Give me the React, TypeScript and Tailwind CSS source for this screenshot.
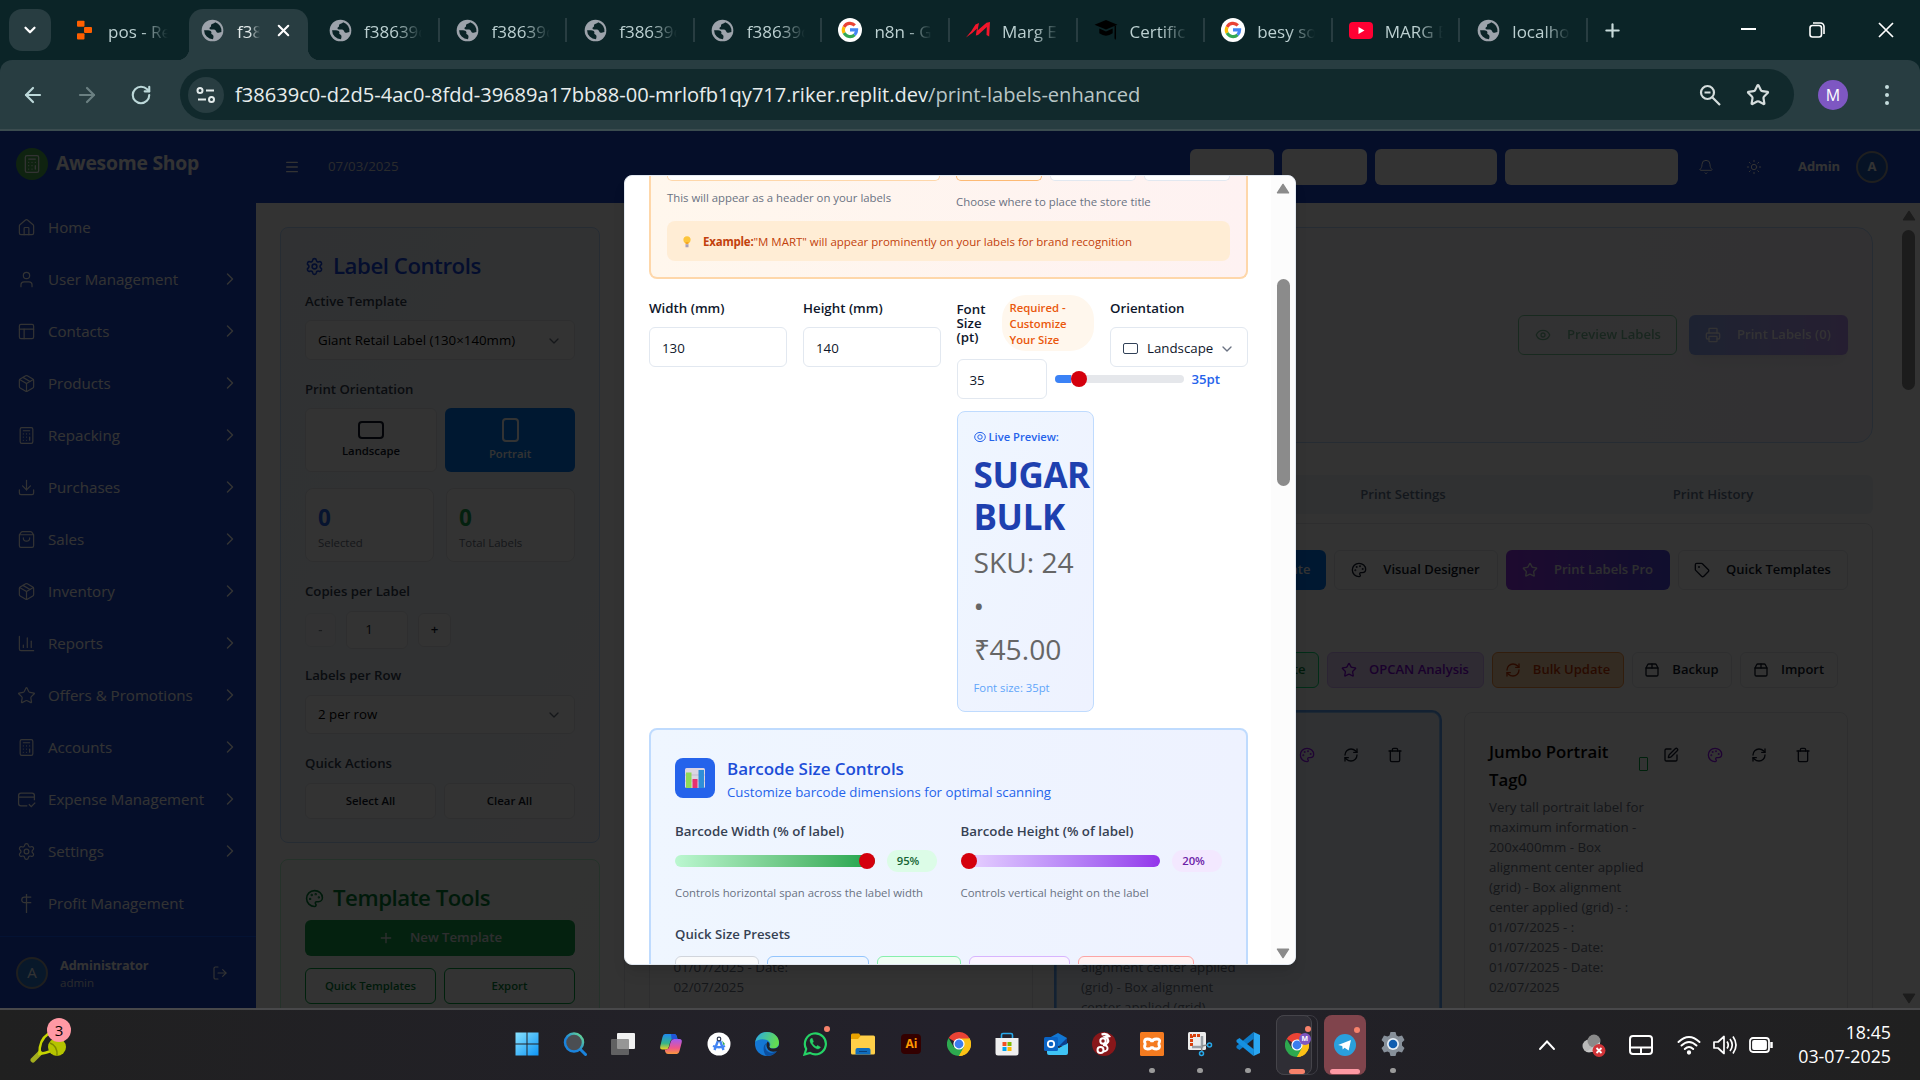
import type { ReactNode } from "react";
import {
  ArrowLeft, ArrowRight, Bell, Calculator, ChartColumn, ChevronDown, ChevronRight, ChevronUp, Download, Eye, House,
  LogOut, Menu, Package, Package2, Palette, PanelsTopLeft, Plus, Printer, RefreshCw, RotateCw, Settings, ShoppingBag, SquarePen,
  Star, Sun, Tag, Trash, User, X,
} from "lucide-react";

/* ---------- browser chrome ---------- */

function Globe() {
  return (
    <svg viewBox="0 0 24 24" className="size-[23px]">
      <circle cx="12" cy="12" r="11.300" fill="#9da3ab" />
      <path d="M3.200 11.800c2.600-.2 5.800-.4 7.200.9 1.400 1.300-.6 2.300.9 3.200 1.500.8 2.400 1.800 1.200 5.100A9.300 9.300 0 0 1 3.200 11.800z" fill="#0b2427" />
      <path d="M14.800 3.300c-.6 1.600-3.200 1.100-4.100 2.400-.7 1.100.4 2-.9 2.700-1.100.6-1.300 1.700-.3 2.300 1.400.8 3.900-.2 5.300.9 1.300 1 .9 2.500 2.400 2.800 1.400.3 2.300-.9 4.100-.9A9.300 9.300 0 0 0 14.800 3.300z" fill="#0b2427" />
    </svg>
  );
}

function Google() {
  return (
    <svg viewBox="0 0 24 24" className="size-6">
      <circle cx="12" cy="12" r="12" fill="#fff" />
      <g fill="none" strokeWidth="3.200">
        <path d="M16.800 7.400A6.700 6.700 0 0 0 6.100 8.900" stroke="#ea4335" />
        <path d="M6.100 8.900a6.700 6.700 0 0 0 0 6.200" stroke="#fbbc05" />
        <path d="M6.100 15.100a6.700 6.700 0 0 0 10.500 1.700" stroke="#34a853" />
        <path d="M16.600 16.800a6.700 6.700 0 0 0 2-4.900H12" stroke="#4285f4" />
      </g>
    </svg>
  );
}

function Replit() {
  return (
    <svg viewBox="0 0 16 20" className="h-[20px] w-[15px]" fill="#ff5f00">
      <rect x="0" y="0" width="8" height="6.500" rx="1" />
      <rect x="7.500" y="6.700" width="8.500" height="6.500" rx="1" />
      <rect x="0" y="13.500" width="8" height="6.500" rx="1" />
    </svg>
  );
}

function Marg() {
  return (
    <svg viewBox="0 0 24 16" className="h-4 w-6">
      <path d="M0 15.500Q6 9 9.500 2.500L13 1l-1.500 7.500L20.500.8 24 0l-.8 14.500-2.700-1.500.3-8L12 13l-2.200.5 1.200-7Q7 11 0 15.500z" fill="#f3162b" />
    </svg>
  );
}

function GradCap() {
  return (
    <svg viewBox="0 0 24 22" className="h-[21px] w-6" fill="#000">
      <path d="M12 0l12 5-12 5L0 5z" />
      <path d="M5 9l7 3 7-3v5q-7 5-14 0zM21 6h1.500v13l-.8 2-.8-2z" />
    </svg>
  );
}

function YouTube() {
  return (
    <svg viewBox="0 0 24 17" className="h-[17px] w-6">
      <rect width="24" height="17" rx="4" fill="#ff0033" />
      <path d="M9.500 5l6 3.500-6 3.500z" fill="#fff" />
    </svg>
  );
}

const tabs: { icon: ReactNode; title: string }[] = [
  { icon: <Globe />, title: "f38639c" },
  { icon: <Globe />, title: "f38639c" },
  { icon: <Globe />, title: "f38639c" },
  { icon: <Globe />, title: "f38639c" },
  { icon: <Google />, title: "n8n - G" },
  { icon: <Marg />, title: "Marg E" },
  { icon: <GradCap />, title: "Certific" },
  { icon: <Google />, title: "besy so" },
  { icon: <YouTube />, title: "MARG E" },
  { icon: <Globe />, title: "localho" },
];

const fade = "[mask-image:linear-gradient(to_right,#000_55%,transparent)]";

function TabStrip() {
  return (
    <div className="flex h-[60px] bg-[#0b2427] text-[17px] text-[#bcd0d1]">
      <div className="mt-[9px] ml-[9px] flex size-[42px] items-center justify-center rounded-[13px] bg-[#283d41]">
        <ChevronDown className="size-[18px] text-white" strokeWidth={3} />
      </div>
      <div className="flex w-[138px] items-center pl-[26px]">
        <Replit />
        <span className={`mt-[3px] ml-4 w-[60px] overflow-hidden whitespace-nowrap ${fade}`}>pos - Re</span>
      </div>
      <div className="relative mt-[9px] flex w-[119px] items-center rounded-t-[14px] bg-[#283d41] pb-[9px] pl-[12px]">
        <span className="absolute bottom-0 -left-3 size-3 bg-[radial-gradient(circle_at_0_0,transparent_12px,#283d41_12.500px)]" />
        <span className="absolute -right-3 bottom-0 size-3 bg-[radial-gradient(circle_at_100%_0,transparent_12px,#283d41_12.500px)]" />
        <Globe />
        <span className={`mt-[3px] ml-[13px] w-[23px] overflow-hidden whitespace-nowrap text-[#e3ebeb] ${fade}`}>f38</span>
        <X className="ml-[14px] size-[19px] text-white" strokeWidth={2.600} />
      </div>
      <div className="ml-[4px] flex">
        {tabs.map((t, i) => (
          <div key={i} className="flex w-[127.600px] items-center pl-4">
            <span className="flex w-6 justify-center">{t.icon}</span>
            <span className={`mt-[3px] ml-3 w-[58px] overflow-hidden whitespace-nowrap ${fade}`}>{t.title}</span>
            <span className="ml-auto h-6 w-[2px] bg-[#283d41]" />
          </div>
        ))}
      </div>
      <Plus className="mt-[20px] ml-[14px] size-[21px] text-[#c8dada]" strokeWidth={2.500} />
      <div className="mr-[26px] ml-auto flex items-center gap-[53px] text-white">
        <span className="mt-[-2px] h-[2px] w-[15px] bg-white" />
        <svg viewBox="0 0 16 16" className="size-4" fill="none" stroke="currentColor" strokeWidth="1.600">
          <rect x="1" y="3.500" width="11.500" height="11.500" rx="2.500" />
          <path d="M4 1h7.500A3.500 3.500 0 0 1 15 4.500V12" />
        </svg>
        <svg viewBox="0 0 16 16" className="size-4" stroke="currentColor" strokeWidth="1.700">
          <path d="M1 1l14 14M15 1L1 15" />
        </svg>
      </div>
    </div>
  );
}

function Toolbar() {
  return (
    <div className="bg-[#0b2427]">
      <div className="flex h-[71px] items-center rounded-t-xl border-b-2 border-[#3b4c4f] bg-[#283d41] pl-[21px] text-[#bcd8d9]">
        <ArrowLeft className="size-6" strokeWidth={2.200} />
        <ArrowRight className="ml-[30px] size-6 text-[#6b8082]" strokeWidth={2.200} />
        <RotateCw className="ml-[31px] size-[22px]" strokeWidth={2.300} />
        <div className="ml-[28px] flex h-[51px] w-[1614px] items-center rounded-full bg-[#11292c] pl-2">
          <div className="flex size-9 items-center justify-center rounded-full bg-[#283d41]">
            <svg viewBox="0 0 20 20" className="size-5" fill="none" stroke="#e3ebeb" strokeWidth="2">
              <circle cx="4" cy="5.500" r="2.500" />
              <path d="M10 5.500h8M2 14.500h8" />
              <circle cx="15.500" cy="14.500" r="2.500" />
            </svg>
          </div>
          <span className="mt-px ml-[11px] text-[20.080px] whitespace-nowrap text-[#e8eded]">
            f38639c0-d2d5-4ac0-8fdd-39689a17bb88-00-mrlofb1qy717.riker.replit.dev<span className="text-[#b9c6c6]">/print-labels-enhanced</span>
          </span>
          <svg viewBox="0 0 24 24" className="ml-auto size-6" fill="none" stroke="#d5dddd" strokeWidth="2.200">
            <circle cx="9.500" cy="9.500" r="6.500" />
            <path d="M14.500 14.500L22 22M6.500 9.500h6" />
          </svg>
          <Star className="mr-6 ml-6 size-6 text-[#d5dddd]" strokeWidth={2.200} />
        </div>
        <span className="ml-6 flex size-[30px] items-center justify-center rounded-full bg-[#7e57c2] text-[16px] text-white">M</span>
        <span className="ml-[37px] flex flex-col gap-[4px]">
          <i className="size-[4px] rounded-full bg-[#c5dcdc]" />
          <i className="size-[4px] rounded-full bg-[#c5dcdc]" />
          <i className="size-[4px] rounded-full bg-[#c5dcdc]" />
        </span>
      </div>
    </div>
  );
}

/* ---------- shop page ---------- */

function ExpenseIcon() {
  return (
    <svg viewBox="0 0 24 24" className="size-[19px]" fill="none" stroke="currentColor" strokeWidth="1.600">
      <path d="M22 13V7a3 3 0 0 0-3-3H5a3 3 0 0 0-3 3v10a3 3 0 0 0 3 3h8M2 9h20M15 18l3 3 5-5" />
    </svg>
  );
}

function ProfitIcon() {
  return (
    <svg viewBox="0 0 24 24" className="size-[19px]" fill="none" stroke="currentColor" strokeWidth="1.600">
      <path d="M12 0v24M18 4H9.500a3.500 3.500 0 0 0 0 7H18" />
    </svg>
  );
}

const ic = "size-[19px]";
const nav: { icon: ReactNode; label: string; more: boolean }[] = [
  { icon: <House className={ic} strokeWidth={1.500} />, label: "Home", more: false },
  { icon: <User className={ic} strokeWidth={1.500} />, label: "User Management", more: true },
  { icon: <PanelsTopLeft className={ic} strokeWidth={1.500} />, label: "Contacts", more: true },
  { icon: <Package className={ic} strokeWidth={1.500} />, label: "Products", more: true },
  { icon: <Calculator className={ic} strokeWidth={1.500} />, label: "Repacking", more: true },
  { icon: <Download className={ic} strokeWidth={1.500} />, label: "Purchases", more: true },
  { icon: <ShoppingBag className={ic} strokeWidth={1.500} />, label: "Sales", more: true },
  { icon: <Package className={ic} strokeWidth={1.500} />, label: "Inventory", more: true },
  { icon: <ChartColumn className={ic} strokeWidth={1.500} />, label: "Reports", more: true },
  { icon: <Star className={ic} strokeWidth={1.500} />, label: "Offers & Promotions", more: true },
  { icon: <Calculator className={ic} strokeWidth={1.500} />, label: "Accounts", more: true },
  { icon: <ExpenseIcon />, label: "Expense Management", more: true },
  { icon: <Settings className={ic} strokeWidth={1.500} />, label: "Settings", more: true },
  { icon: <ProfitIcon />, label: "Profit Management", more: false },
];

function Sidebar() {
  return (
    <aside className="flex w-64 shrink-0 flex-col bg-[#1a46cc] text-white">
      <div className="flex h-[65px] items-center pl-4">
        <span className="flex size-8 items-center justify-center rounded-full bg-[#4caf50]">
          <Calculator className="size-[20px]" strokeWidth={1.500} />
        </span>
        <span className="ml-2 text-[19.300px] font-bold tracking-[-0.200px]">Awesome Shop</span>
      </div>
      <nav className="mt-[5px] flex flex-col">
        {nav.map((n) => (
          <div key={n.label} className="flex h-[52px] items-center pr-[16px] pl-[17px] text-[15.100px]">
            {n.icon}
            <span className="ml-3 whitespace-nowrap">{n.label}</span>
            {n.more && <ChevronRight className="ml-auto size-[20px]" strokeWidth={1.700} />}
          </div>
        ))}
      </nav>
      <div className="mt-[7px] flex flex-1 items-center border-t border-blue-600 pl-4">
        <span className="flex size-8 items-center justify-center rounded-full border-2 border-[#999] bg-[#2c78d0] text-[15px]">A</span>
        <span className="ml-3 flex flex-col">
          <span className="text-[12.700px] leading-5 font-bold tracking-[-0.100px]">Administrator</span>
          <span className="text-[11.500px] leading-4 text-gray-300">admin</span>
        </span>
        <LogOut className="mr-[28px] ml-auto size-4" strokeWidth={1.700} />
      </div>
    </aside>
  );
}

function Header() {
  return (
    <header className="flex h-[72px] shrink-0 items-center bg-[#1a46cc] pl-7 text-white">
      <Menu className="size-4" />
      <span className="ml-7 text-[13.300px] text-gray-300">07/03/2025</span>
      <div className="ml-auto flex h-9 gap-2">
        <span className="w-[84px] rounded-md bg-white" />
        <span className="w-[85px] rounded-md bg-white" />
        <span className="w-[122px] rounded-md bg-white" />
        <span className="w-[173px] rounded-md bg-white" />
      </div>
      <Bell className="ml-5 size-4" strokeWidth={1.500} />
      <Sun className="ml-8 size-4" strokeWidth={1.500} />
      <span className="ml-9 text-[13px] font-bold tracking-[-0.100px]">Admin</span>
      <span className="mr-8 ml-4 flex size-8 items-center justify-center rounded-full border-2 border-[#999] bg-[#1f5db8] text-[13px] font-bold">A</span>
    </header>
  );
}

const fieldLabel = "h-5 text-[13.200px] leading-5 font-semibold text-gray-700";
const whiteBtn = "flex items-center justify-center rounded-md border border-gray-200 bg-white font-semibold text-gray-900";

function LabelControls() {
  return (
    <section className="h-[616px] rounded-lg border border-blue-200 bg-linear-to-br from-blue-50 to-slate-50 px-6 pt-[23px]">
      <h2 className="flex h-[30px] items-center text-[22.200px] font-semibold tracking-[-0.450px] text-blue-700">
        <Settings className="mr-[9px] size-[19px]" />
        Label Controls
      </h2>
      <div className={`${fieldLabel} mt-[10px]`}>Active Template</div>
      <div className="mt-[9px] flex h-10 items-center rounded-md border border-gray-200 bg-white px-3 pt-px text-[13.300px] text-black">
        Giant Retail Label (130×140mm)
        <ChevronDown className="ml-auto size-4 text-gray-500" />
      </div>
      <div className={`${fieldLabel} mt-[19px]`}>Print Orientation</div>
      <div className="mt-[9px] flex h-16 gap-[8px]">
        <div className={`${whiteBtn} flex-1 flex-col gap-1 text-[11.300px]`}>
          <span className="h-[18px] w-[26px] rounded-[4px] border-2 border-gray-900" />
          Landscape
        </div>
        <div className="flex flex-1 flex-col items-center justify-center gap-1 rounded-md bg-[#0079f2] text-[11.300px] font-semibold text-white">
          <span className="h-[24px] w-[17px] rounded-[4px] border-2 border-white" />
          <span className="leading-4">Portrait</span>
        </div>
      </div>
      <div className="mt-4 flex h-[74px] gap-3">
        <div className="flex flex-1 flex-col rounded-lg border border-gray-200 bg-white pt-3 pl-3">
          <span className="text-[22.500px] leading-[34px] font-bold text-[#2563eb]">0</span>
          <span className="text-[11.400px] leading-4 text-gray-500">Selected</span>
        </div>
        <div className="flex flex-1 flex-col rounded-lg border border-gray-200 bg-white pt-3 pl-3">
          <span className="text-[22.500px] leading-[34px] font-bold text-[#16a34a]">0</span>
          <span className="text-[11.400px] leading-4 text-gray-500">Total Labels</span>
        </div>
      </div>
      <div className={`${fieldLabel} mt-[19px]`}>Copies per Label</div>
      <div className="mt-[10px] flex h-[38px] items-center text-[13.300px]">
        <span className={`${whiteBtn} h-[34px] w-[31px] opacity-50`}>-</span>
        <span className="ml-[10px] flex h-[38px] w-[62px] items-center justify-center rounded-md border border-gray-200 bg-white pr-4 text-gray-900">1</span>
        <span className={`${whiteBtn} ml-[10px] h-[34px] w-[33px]`}>+</span>
      </div>
      <div className={`${fieldLabel} mt-4`}>Labels per Row</div>
      <div className="mt-[10px] flex h-[39px] items-center rounded-md border border-gray-200 bg-white px-3 text-[13.300px] text-black">
        2 per row
        <ChevronDown className="ml-auto size-4 text-gray-500" />
      </div>
      <div className={`${fieldLabel} mt-[19px]`}>Quick Actions</div>
      <div className="mt-[10px] flex h-9 gap-[8px] text-[11.400px]">
        <span className={`${whiteBtn} flex-1`}>Select All</span>
        <span className={`${whiteBtn} flex-1`}>Clear All</span>
      </div>
    </section>
  );
}

function TemplateTools() {
  return (
    <section className="mt-4 h-[400px] rounded-lg border border-green-200 bg-linear-to-br from-green-50/50 to-slate-50 px-6 pt-[23px]">
      <h2 className="flex h-[30px] items-center text-[22.200px] font-semibold tracking-[-0.450px] text-green-700">
        <Palette className="mr-[9px] size-[19px]" />
        Template Tools
      </h2>
      <div className="mt-[7px] flex h-9 items-center justify-center rounded-md bg-[#16a34a] text-[13.200px] font-semibold text-gray-200">
        <Plus className="mr-4 size-4" />
        New Template
      </div>
      <div className="mt-3 flex h-9 gap-[8px] text-[11.300px] font-semibold text-green-700">
        <span className="flex flex-1 items-center justify-center rounded-md border border-green-600 bg-white">Quick Templates</span>
        <span className="flex flex-1 items-center justify-center rounded-md border border-green-600 bg-white">Export</span>
      </div>
    </section>
  );
}

function CardActions() {
  return (
    <div className="mr-[36px] ml-auto flex items-center gap-7 self-start pt-[34px] text-gray-900">
      <SquarePen className="size-4" />
      <Palette className="size-4 text-purple-600" />
      <RefreshCw className="size-4" />
      <Trash className="size-4" />
    </div>
  );
}

function Lines({ items }: { items: string[] }) {
  return (
    <div className="text-[13.300px] leading-5 whitespace-nowrap text-gray-500">
      {items.map((line, i) => (
        <div key={i}>{line}</div>
      ))}
    </div>
  );
}

function TemplateCards() {
  return (
    <div className="mt-6 flex gap-[23.500px]">
      <div className="h-[400px] w-[384px] rounded-lg border border-gray-200 bg-white pt-[244px] pl-6">
        <Lines items={["01/07/2025 - Date:", "02/07/2025"]} />
      </div>
      <div className="flex h-[400px] w-[384px] rounded-lg border border-[#93c5fd] bg-[#eff6ff] pl-6 ring-2 ring-[#60a5fa]">
        <div className="w-[170px] pt-[244px]">
          <Lines items={["alignment center applied", "(grid) - Box alignment", "center applied (grid)"]} />
        </div>
        <CardActions />
      </div>
      <div className="flex h-[400px] w-[384px] rounded-lg border border-gray-200 bg-white pl-[24.500px]">
        <div className="mt-[25px] w-[163px] shrink-0">
          <div className="flex h-[56px] items-center">
            <span className="w-[150px] text-[16.800px] leading-7 font-semibold whitespace-nowrap text-black">
              Jumbo Portrait
              <br />
              Tag0
            </span>
            <span className="mt-[-4px] h-[14px] w-[9px] shrink-0 rounded-[1px] border border-green-600" />
          </div>
          <div className="mt-[3px]">
            <Lines
              items={[
                "Very tall portrait label for",
                "maximum information -",
                "200x400mm - Box",
                "alignment center applied",
                "(grid) - Box alignment",
                "center applied (grid) - :",
                "01/07/2025 - :",
                "01/07/2025 - Date:",
                "01/07/2025 - Date:",
                "02/07/2025",
              ]}
            />
          </div>
        </div>
        <CardActions />
      </div>
    </div>
  );
}

function MainColumn() {
  return (
    <div className="flex w-[1249px] flex-col">
      <section className="flex h-[216px] shrink-0 items-center justify-end gap-3 rounded-2xl border border-blue-200 bg-linear-to-r from-blue-50 via-slate-50 to-purple-50 pr-6 text-[13.100px] font-semibold">
        <span className="flex h-10 w-[159px] items-center rounded-md border border-green-600 bg-white/50 pl-[16px] text-green-700 opacity-50">
          <Eye className="mr-4 size-4" />
          Preview Labels
        </span>
        <span className="flex h-10 w-[159px] items-center rounded-md bg-linear-to-r from-[#2563eb] to-[#7c3aed] pl-4 text-white opacity-50 shadow-lg">
          <Printer className="mr-4 size-4" />
          Print Labels (0)
        </span>
      </section>
      <div className="mt-8 grid h-[39px] shrink-0 grid-cols-[1fr_310px_310px] items-center rounded-md bg-slate-100 pr-[5px] text-center text-[13.200px] font-semibold text-slate-500">
        <span />
        <span>Print Settings</span>
        <span>Print History</span>
      </div>
      <section className="mt-[9px] h-[700px] shrink-0 rounded-lg border border-gray-200 bg-white px-[23.500px] pt-[26px] text-[13px] font-semibold">
        <div className="mr-px flex h-10 justify-end gap-2">
          <span className="flex w-[150px] items-center justify-end rounded-md bg-[#0079f2] pr-[15px] text-white">
            <span className="w-[30px] overflow-hidden text-right">ate</span>
          </span>
          <span className={`${whiteBtn} w-[164px]`}><Palette className="mr-4 size-4" />Visual Designer</span>
          <span className="flex w-[164px] items-center justify-center rounded-md bg-linear-to-r from-[#9333ea] to-[#4f46e5] text-gray-200"><Star className="mr-4 size-4" />Print Labels Pro</span>
          <span className={`${whiteBtn} w-[170px]`}><Tag className="mr-4 size-4" />Quick Templates</span>
        </div>
        <div className="mt-[62px] mr-[11px] flex h-9 justify-end gap-2">
          <span className="flex w-[80px] items-center justify-end rounded-md border border-green-400 bg-[#dcfce7] pr-[12px] text-green-700">te</span>
          <span className="flex w-[157px] items-center justify-center rounded-md border border-[#d8b4fe] bg-[#e9d5ff] text-purple-700"><Star className="mr-3 size-4" />OPCAN Analysis</span>
          <span className="flex w-[132px] items-center justify-center rounded-md border border-[#fb923c] bg-[#fed7aa] text-orange-700"><RefreshCw className="mr-3 size-4" />Bulk Update</span>
          <span className={`${whiteBtn} w-[100px]`}><Package2 className="mr-3 size-4" />Backup</span>
          <span className={`${whiteBtn} w-[98px]`}><Package2 className="mr-3 size-4" />Import</span>
        </div>
        <div className="font-normal">
          <TemplateCards />
        </div>
      </section>
    </div>
  );
}

/* ---------- template dialog ---------- */

const dlgLabel = "text-[13.300px] leading-5 font-semibold text-slate-900";
const dlgInput = "flex h-10 items-center rounded-md border border-slate-200 bg-white px-3 pt-[3px] text-[13.300px] text-slate-900";

function StoreTitle() {
  return (
    <section className="h-[103px] overflow-hidden rounded-b-lg border-2 border-t-0 border-[#fed7aa] bg-linear-to-r from-[#fff7ed] to-[#fef2f2] px-4">
      <div className="flex gap-4">
        <div className="w-[273px]">
          <div className="h-[5px] rounded-b-md border border-t-0 border-[#fed7aa] bg-white" />
          <div className="mt-[9px] text-[11.350px] leading-4 text-gray-500">This will appear as a header on your labels</div>
        </div>
        <div className="flex-1">
          <div className="flex h-[5px] gap-2">
            <span className="flex-1 rounded-b-md border border-t-0 border-[#fdba74] bg-[#fff7ed]" />
            <span className="flex-1 rounded-b-md border border-t-0 border-slate-200 bg-white" />
            <span className="flex-1 rounded-b-md border border-t-0 border-slate-200 bg-white" />
          </div>
          <div className="mt-[13px] text-[11.400px] leading-4 text-gray-500">Choose where to place the store title</div>
        </div>
      </div>
      <div className="mt-[11px] flex h-10 items-center rounded-lg bg-[#ffedd5] pt-px pl-[15px] text-[11.470px] text-[#c2410c]">
        <svg viewBox="0 0 12 16" className="mr-[11px] h-3 w-[10px]">
          <circle cx="6" cy="5" r="4.800" fill="#fcc53b" />
          <path d="M4 8h4v3H4z" fill="#f5a623" />
          <path d="M4 11h4v4H4z" fill="#a8a0b8" />
        </svg>
        <span className="whitespace-nowrap"><b className="font-bold tracking-[-0.200px]">Example:</b>"M MART" will appear prominently on your labels for brand recognition</span>
      </div>
    </section>
  );
}

function SizeFields() {
  return (
    <div className="mt-[16px] flex h-[417px] gap-4">
      <div className="w-[138px] pt-[3px]">
        <div className={dlgLabel}>Width (mm)</div>
        <div className={`${dlgInput} mt-[9px]`}>130</div>
      </div>
      <div className="w-[137.500px] pt-[3px]">
        <div className={dlgLabel}>Height (mm)</div>
        <div className={`${dlgInput} mt-[9px]`}>140</div>
      </div>
      <div className="w-[137.500px]">
        <div className="flex h-14 items-center">
          <div className="w-[45px] text-[13.300px] leading-[14px] font-semibold text-slate-900">Font Size (pt)</div>
          <div className="w-[92px] rounded-[24px] bg-[#fff7ed] px-2 pt-[5px] pb-[3px] text-[11.300px] leading-4 font-semibold text-[#ea580c]">Required - Customize Your Size</div>
        </div>
        <div className="mt-2 flex w-[270px] items-center">
          <div className={`${dlgInput} w-[90px]`}>35</div>
          <div className="ml-2 flex h-2 w-[129px] items-center rounded-full bg-gray-200">
            <span className="h-2 w-4 rounded-l-full bg-[#3b82f6]" />
            <span className="size-4 rounded-full bg-[#d4000d]" />
          </div>
          <span className="mt-px ml-2 text-[13.200px] font-semibold text-[#2563eb]">35pt</span>
        </div>
        <div className="mt-3 h-[301px] rounded-lg border border-[#bfdbfe] bg-linear-to-br from-[#eff6ff] to-[#eef2ff] px-4 pt-[17px]">
          <div className="flex h-4 items-center text-[11.200px] font-semibold whitespace-nowrap text-[#2563eb]">
            <svg viewBox="0 0 12 12" className="mr-[3px] size-3" fill="none" stroke="currentColor">
              <ellipse cx="6" cy="6" rx="5.300" ry="4.600" />
              <circle cx="6" cy="6" r="2.200" />
            </svg>
            Live Preview:
          </div>
          <div className="mt-[9px] text-[35px] leading-[42px] font-bold tracking-[-0.400px] text-[#1e40af]">
            SUGAR
            <br />
            BULK
          </div>
          <div className="mt-[3px] text-[28.200px] leading-[43.500px] whitespace-nowrap text-[#666]">
            SKU: 24
            <br />
            •
            <br />
            ₹45.00
          </div>
          <div className="mt-[8px] text-[11.300px] leading-4 text-[#60a5fa]">Font size: 35pt</div>
        </div>
      </div>
      <div className="w-[138px] pt-[3px]">
        <div className={dlgLabel}>Orientation</div>
        <div className={`${dlgInput} mt-[9px]`}>
          <span className="mr-[9px] h-[11px] w-[15px] shrink-0 rounded-[2px] border-[1.500px] border-slate-700" />
          Landscape
          <ChevronDown className="ml-auto size-4 text-gray-500" />
        </div>
      </div>
    </div>
  );
}

function BarcodeControls() {
  return (
    <section className="mt-[16px] h-[400px] rounded-lg border-2 border-[#bfdbfe] bg-linear-to-r from-[#eff6ff] to-[#eef2ff] px-6 pt-[27.500px]">
      <div className="flex h-10 items-center">
        <span className="flex size-10 items-center justify-center rounded-lg bg-[#2563eb]">
          <svg viewBox="0 0 20 20" className="size-5">
            <rect width="20" height="20" rx="1.500" fill="#dcd5e2" />
            <path d="M0 7h20M0 13h20" stroke="#b9b0c4" strokeWidth=".7" />
            <rect x="1" y="4.500" width="5.500" height="15.500" fill="#8fd957" />
            <rect x="7.500" y="11" width="5" height="9" fill="#e5316f" />
            <rect x="13.500" y="2" width="5.500" height="18" fill="#2f8fd8" />
          </svg>
        </span>
        <div className="mt-[2px] ml-3">
          <div className="text-[17px] leading-[27px] font-semibold tracking-[-0.050px] text-[#1d4ed8]">Barcode Size Controls</div>
          <div className="text-[13.250px] leading-5 text-[#2563eb]">Customize barcode dimensions for optimal scanning</div>
        </div>
      </div>
      <div className="mt-[23px] flex gap-6">
        <div className="w-[261.500px]">
          <div className="text-[13.300px] leading-5 font-semibold text-gray-700">Barcode Width (% of label)</div>
          <div className="mt-[9px] flex h-[23px] items-center">
            <div className="flex h-3 w-[200.500px] items-center justify-end rounded-full bg-linear-to-r from-[#bbf7d0] to-[#16a34a]">
              <span className="size-4 rounded-full bg-[#d4000d]" />
            </div>
            <span className="ml-3 flex h-[22px] w-[50px] items-center rounded-full bg-[#dcfce7] pl-[10px] text-[11.300px] font-semibold text-[#166534]">95%</span>
          </div>
          <div className="mt-[10px] text-[11.350px] leading-5 text-gray-500">Controls horizontal span across the label width</div>
        </div>
        <div className="w-[261.500px]">
          <div className="text-[13.300px] leading-5 font-semibold text-gray-700">Barcode Height (% of label)</div>
          <div className="mt-[9px] flex h-[23px] items-center">
            <div className="flex h-3 w-[200.500px] items-center rounded-full bg-linear-to-r from-[#e9d5ff] to-[#9333ea]">
              <span className="size-4 rounded-full bg-[#d4000d]" />
            </div>
            <span className="ml-3 flex h-[22px] w-[50px] items-center rounded-full bg-[#f3e8ff] pl-[10px] text-[11.300px] font-semibold text-[#6b21a8]">20%</span>
          </div>
          <div className="mt-[10px] text-[11.400px] leading-5 text-gray-500">Controls vertical height on the label</div>
        </div>
      </div>
      <div className="mt-[21px] text-[13.200px] leading-5 font-semibold text-gray-700">Quick Size Presets</div>
      <div className="mt-[12px] flex gap-2">
        <span className="h-9 w-[84px] rounded-md border border-gray-300 bg-gray-50" />
        <span className="h-9 w-[102px] rounded-md border border-[#93c5fd] bg-[#eff6ff]" />
        <span className="h-9 w-[84px] rounded-md border border-[#86efac] bg-[#f0fdf4]" />
        <span className="h-9 w-[101px] rounded-md border border-[#d8b4fe] bg-[#faf5ff]" />
        <span className="h-9 w-[116px] rounded-md border border-[#fca5a5] bg-[#fef2f2]" />
      </div>
    </section>
  );
}

function ArrowTip({ down = false }: { down?: boolean }) {
  return (
    <svg viewBox="0 0 14 11" className={down ? "h-[11px] w-[14px] rotate-180" : "h-[11px] w-[14px]"}>
      <path d="M7 1.500l5.500 8.300h-11z" fill="#8b8b8b" stroke="#8b8b8b" strokeWidth="1.500" strokeLinejoin="round" />
    </svg>
  );
}

function TemplateDialog() {
  return (
    <div className="absolute top-[44px] left-[624px] flex h-[790px] w-[672px] overflow-hidden rounded-lg border border-slate-200 bg-white shadow-lg">
      <div className="w-[623px] pl-6">
        <StoreTitle />
        <SizeFields />
        <BarcodeControls />
      </div>
      <div className="ml-auto flex w-[24px] flex-col items-center bg-[#fcfcfc] pt-[7px] pb-[5px]">
        <ArrowTip />
        <span className="mt-[85px] h-[207px] w-[13px] rounded-full bg-[#8b8b8b]" />
        <span className="mt-auto flex"><ArrowTip down /></span>
      </div>
    </div>
  );
}

function ShopPage() {
  return (
    <div className="relative flex h-[877px] overflow-hidden bg-white">
      <Sidebar />
      <div className="flex flex-1 flex-col">
        <Header />
        <div className="flex flex-1 overflow-hidden">
          <div className="flex pt-6 pl-[24px]">
            <div className="mr-6 w-[320px]">
              <LabelControls />
              <TemplateTools />
            </div>
            <MainColumn />
          </div>
          <div className="mr-[4px] ml-auto flex h-[805px] w-[15px] flex-col items-center pt-[7px] pb-[4px]">
            <ArrowTip />
            <span className="mt-[9px] h-[160px] w-[13px] rounded-full bg-[#8b8b8b]" />
            <span className="mt-auto flex"><ArrowTip down /></span>
          </div>
        </div>
      </div>
      <div className="absolute inset-0 bg-black/80" />
      <TemplateDialog />
    </div>
  );
}

/* ---------- taskbar ---------- */

function ChromeLogo() {
  return (
    <svg viewBox="0 0 24 24" className="size-6">
      <path d="M12 12L1.600 6A12 12 0 0 1 22.400 6z" fill="#ea4335" />
      <path d="M12 12l10.400-6A12 12 0 0 1 12 24z" fill="#fbc116" />
      <path d="M12 12l5.200 3L12 24A12 12 0 0 1 1.600 6L6.800 15z" fill="#2da94f" />
      <path d="M12 6.500h10.600A12 12 0 0 1 12 24l5-9z" fill="#fbc116" />
      <circle cx="12" cy="12" r="5.600" fill="#fff" />
      <circle cx="12" cy="12" r="4.400" fill="#3b7ded" />
    </svg>
  );
}

const taskIcons: ReactNode[] = [
  <svg viewBox="0 0 24 24" className="size-6">
    <defs><linearGradient id="win" x1="0" y1="0" x2="24" y2="24" gradientUnits="userSpaceOnUse"><stop stopColor="#8be4ff" /><stop offset="1" stopColor="#0b93f5" /></linearGradient></defs>
    <path d="M.5.5h11v11H.5zM12.500.5h11v11h-11zM.5 12.500h11v11H.5zM12.500 12.500h11v11h-11z" fill="url(#win)" />
  </svg>,
  <svg viewBox="0 0 24 24" className="size-6" fill="none">
    <defs><linearGradient id="srch" x1="0" y1="1" x2="1" y2="0"><stop offset=".4" stopColor="#1a83dc" /><stop offset="1" stopColor="#6fe08a" /></linearGradient></defs>
    <path d="M17 17l5.500 5.500" stroke="#1a83dc" strokeWidth="3" strokeLinecap="round" />
    <circle cx="11" cy="10.500" r="9" fill="#4b4e52" stroke="url(#srch)" strokeWidth="2.500" />
  </svg>,
  <svg viewBox="0 0 24 24" className="size-6">
    <rect x="6" y="1" width="18" height="16" rx="1" fill="#f1f1f1" />
    <rect x="0" y="7" width="18" height="16" rx="1" fill="#777" fillOpacity=".75" />
  </svg>,
  <svg viewBox="0 0 24 24" className="size-6">
    <defs>
      <linearGradient id="cpa" x1="0" y1="0" x2="0" y2="1"><stop stopColor="#1f8af0" /><stop offset=".6" stopColor="#35b48a" /><stop offset="1" stopColor="#f2d21f" /></linearGradient>
      <linearGradient id="cpb" x1="0" y1="0" x2="0" y2="1"><stop stopColor="#a35af0" /><stop offset=".6" stopColor="#f0568a" /><stop offset="1" stopColor="#f99a3c" /></linearGradient>
    </defs>
    <path d="M6 2h9q2 0 2.700 2l.8 3H14q-2 0-2.700 2.500L9.800 15q-.8 2.500-3 2.500H3.500Q.5 17.500 1.300 14L3.500 5Q4.300 2 6 2z" fill="url(#cpa)" />
    <path d="M12 2h3q2 0 2.700 2l.8 3h-6z" fill="#2056d8" />
    <path d="M18 22H9q-2 0-2.700-2l-.5-2.500q3.500.5 4.200-2l1.800-6Q12.500 7 15 7h5.500q3 0 2.200 3.500L20.500 19q-.8 3-2.500 3z" fill="url(#cpb)" />
  </svg>,
  <svg viewBox="0 0 24 24" className="size-6" fill="none">
    <circle cx="12" cy="12" r="11.500" fill="#fff" />
    <path d="M15 8.500l3 3.500-1.500 1.500z" fill="#34a853" />
    <path d="M12 6L7.500 18M12 6l4.500 12M6 14q6 2.500 12 0" stroke="#4285f4" strokeWidth="2.400" />
    <circle cx="12" cy="7" r="1.800" fill="#fff" stroke="#333c52" strokeWidth="1.200" />
  </svg>,
  <svg viewBox="0 0 24 24" className="size-6">
    <defs><linearGradient id="edge" x1="0" y1="0" x2="1" y2=".3"><stop stopColor="#2aa8e8" /><stop offset="1" stopColor="#63dc50" /></linearGradient></defs>
    <circle cx="12" cy="12" r="12" fill="#1477d4" />
    <path d="M.3 10C1.500 4 6 0 12 0c7 0 12 5 12 10.500 0 4-3 6-6 6-2.500 0-3.800-1-3.500-2 1.500-1 1-5-2.500-6.500C8 6.500 2.500 7 .3 10z" fill="url(#edge)" />
    <path d="M12 11c-3 2.500-2 8 3 9.500 3 .8 5.500-.5 7.500-2.500A12 12 0 0 1 12 24C8 22 7 12 12 11z" fill="#0c4f9f" />
    <path d="M12.500 9.500c2 1 2.500 3.500 1.800 5 0 1.500 2.200 2.300 4.700 2 2-.2 4-1 5-3v3l-1.500 2.500q-6 2-9-1-3.500-4-1-8.500z" fill="#202026" />
  </svg>,
  <svg viewBox="0 0 24 24" className="size-6" fill="none" stroke="#25d366" strokeWidth="2.200">
    <path d="M1.500 22.500L3.200 17A10.500 10.500 0 1 1 7 20.900z" />
    <path d="M8 6.500q-2 2 0 5 2.300 4 5.800 5.300 2.500.7 3.700-1.600l-3-1.700-1.300 1.300q-2.500-1-3.800-3.800l1-1.300L9.300 6.500z" fill="#25d366" strokeWidth=".5" />
  </svg>,
  <svg viewBox="0 0 24 24" className="size-6">
    <path d="M0 3q0-1.500 1.500-1.500H8L10 4v4H0z" fill="#e8a200" />
    <path d="M0 7h7l3-3.500h12.500Q24 3.500 24 5v16q0 1.500-1.500 1.500h-21Q0 22.500 0 21z" fill="#ffcf48" />
    <path d="M4.500 22.500V18q0-2 2-2h11q2 0 2 2v4.500z" fill="#0f6cbd" />
    <path d="M8 19.500h8" stroke="#0a3f78" />
  </svg>,
  <span className="flex size-5 items-center justify-center rounded-[4px] bg-[#330000] text-[12px] leading-none font-bold text-[#ff9a00]">Ai</span>,
  <ChromeLogo />,
  <svg viewBox="0 0 24 24" className="size-6">
    <path d="M6.500 7V3q0-1.500 1.500-1.500h8q1.500 0 1.500 1.500v4" fill="none" stroke="#27a9ea" strokeWidth="1.600" />
    <path d="M.5 6h23v15q0 2.500-2.500 2.500H3Q.5 23.500.5 21z" fill="#efefef" />
    <path d="M7.500 10h4v4h-4z" fill="#f25022" /><path d="M12.500 10h4v4h-4z" fill="#7fba00" />
    <path d="M7.500 15h4v4h-4z" fill="#00a4ef" /><path d="M12.500 15h4v4h-4z" fill="#ffb900" />
  </svg>,
  <svg viewBox="0 0 24 24" className="size-6">
    <path d="M5 6l9-5 9 5v8H5z" fill="#1277d3" />
    <path d="M3 11l12 5 9-5v10q0 2-2 2H5q-2 0-2-2z" fill="#3fc4f5" />
    <path d="M14 15l9-9v6z" fill="#0d3f8c" />
    <rect x="0" y="5" width="14" height="14" rx="1.500" fill="#0a63c4" />
    <circle cx="7" cy="12" r="3.200" fill="none" stroke="#fff" strokeWidth="1.800" />
  </svg>,
  <svg viewBox="0 0 24 24" className="size-6" fill="none">
    <circle cx="12" cy="12" r="12" fill="#88171a" />
    <path d="M9.500 2.500q5-1.500 7.500 1.700l-3.500.8q3.500 2 2.500 5-1.500 2.500-4.500 3.500" stroke="#fff" strokeWidth="2.300" />
    <circle cx="11" cy="9" r="2.700" stroke="#fff" strokeWidth="2" />
    <circle cx="8.500" cy="18" r="3" stroke="#fff" strokeWidth="2" />
    <path d="M11 13q5 0 4.500 4-1 3-4 2" stroke="#fff" strokeWidth="2" />
  </svg>,
  <svg viewBox="0 0 24 24" className="size-6" fill="none">
    <rect width="24" height="24" rx="1.500" fill="#f47b20" />
    <path d="M7.500 7q4 0 4.500 3 .5-3 4.500-3t3 3q-.5 2-2 2 1.500 0 2 2 0 3-3 3-4 0-4.500-2.500Q11.500 17 7.500 17q-3 0-3-3 .5-2 2-2-1.500 0-2-2 0-3 3-3z" stroke="#fff" strokeWidth="2.800" />
  </svg>,
  <svg viewBox="0 0 24 24" className="size-6 overflow-visible" fill="none">
    <rect x="0" y="0" width="18" height="18" rx="1.500" fill="#ececec" />
    <path d="M3.500 14V3.500H13" stroke="#d8400c" strokeWidth="3" strokeDasharray="3 1" />
    <path d="M14 4v11H4" stroke="#9aa0a6" strokeWidth="2.500" />
    <path d="M14 14l5-1M13.500 15.500l.5 4" stroke="#888" strokeWidth="1.500" />
    <circle cx="21.500" cy="13" r="2" stroke="#27a9ea" strokeWidth="1.500" />
    <circle cx="13.500" cy="21.500" r="2" stroke="#27a9ea" strokeWidth="1.500" />
  </svg>,
  <svg viewBox="0 0 24 24" className="size-6">
    <path d="M17.500 0L24 3v18l-6.500 3z" fill="#2aa7f2" />
    <path d="M18 6.500L3.500 18 .5 16v-2L17.500 0z" fill="#0d7bc8" />
    <path d="M18 17.500L3.500 6 .5 8v2l17 14z" fill="#1590e0" />
  </svg>,
];

function Dot() {
  return <span className="absolute bottom-[-17px] left-1/2 h-[5px] w-[6px] -translate-x-1/2 rounded-full bg-[#9a9a9a]" />;
}

function Taskbar() {
  return (
    <div className="flex h-[72px] items-center border-t-2 border-[#48484a] bg-linear-to-r from-[#202020] via-[#23212b] to-[#202020] text-white">
      <div className="relative ml-[30px] size-9">
        <svg viewBox="0 0 36 36" className="size-9" fill="none">
          <path d="M3 33l7-7" stroke="#a3ad1e" strokeWidth="5" strokeLinecap="round" />
          <path d="M9.500 27Q9 13 18 7l8 3q3 9-5 14-5 2-11.500 3z" stroke="#c6d400" strokeWidth="2.600" />
          <circle cx="27" cy="20" r="9" fill="#b5c400" />
          <path d="M20 16q8 3 7 13" stroke="#7d8a00" strokeWidth="1.500" />
        </svg>
        <span className="absolute -top-[9px] left-[17px] flex size-6 items-center justify-center rounded-full bg-[#ff99a4] text-[15px] text-black">3</span>
      </div>
      <div className="ml-[437px] flex items-center">
        {taskIcons.map((icon, i) => (
          <div key={i} className="flex w-[48.050px] -translate-y-px justify-center">
            <span className="relative flex h-6 w-6 items-center justify-center">
              {icon}
              {i === 6 && <span className="absolute -top-[6px] -right-[3px] size-[6px] rounded-full bg-[#f7826b]" />}
              {i > 12 && <Dot />}
            </span>
          </div>
        ))}
        <div className="ml-[4px] h-[60px] w-[42px] rounded-lg border border-[#3c3b42]">
          <div className="relative -mt-px -ml-px flex h-[60px] w-9 items-center justify-center rounded-lg border border-[#45444a] bg-[#2f2e35] pl-[6px]">
            <ChromeLogo />
            <span className="absolute top-[17px] right-0 flex size-3 items-center justify-center rounded-full bg-[#7e57c2] text-[7px] font-bold">M</span>
            <span className="absolute top-[10px] right-0 size-[6px] rounded-full bg-[#f7826b]" />
            <span className="absolute bottom-0 h-[5px] w-4 rounded-full bg-[#f7826b]" />
          </div>
        </div>
        <div className="relative ml-[6px] flex h-[60px] w-[42px] items-center justify-center rounded-lg bg-[#80444c]">
          <svg viewBox="0 0 24 24" className="size-[22px]">
            <circle cx="12" cy="12" r="12" fill="#2a9fdc" />
            <path d="M4.500 12L18.500 6.500 16 18l-4.500-3-2 2-.5-4z" fill="#fff" />
          </svg>
          <span className="absolute top-3 right-[6px] size-[6px] rounded-full bg-[#f7826b]" />
          <span className="absolute bottom-[1px] h-[5px] w-[30px] rounded-full bg-[#ff99a4]" />
        </div>
        <div className="ml-[3px] flex w-12 -translate-y-px justify-center">
          <span className="relative">
            <svg viewBox="0 0 24 24" className="size-6">
              <path d="M9.500 0h5l1 3.500 2 1L21 3.500l2.500 4.500L21 10.500v3l2.500 2.500-2.500 4.500-3.500-1-2 1-1 3.500h-5l-1-3.500-2-1-3.500 1L.5 16 3 13.500v-3L.5 8 3 3.500l3.500 1 2-1z" fill="#87909a" />
              <circle cx="12" cy="12" r="6" fill="#e6eef5" />
              <circle cx="12" cy="12" r="4.300" fill="#0f5db0" />
            </svg>
            <Dot />
          </span>
        </div>
      </div>
      <div className="mr-[29px] ml-auto flex items-center">
        <svg viewBox="0 0 18 12" className="h-3 w-[18px]" fill="none" stroke="#fff" strokeWidth="1.900" strokeLinecap="round">
          <path d="M2 10l7-7.500 7 7.500" />
        </svg>
        <svg viewBox="0 0 26 24" className="ml-[25px] h-6 w-[26px]">
          <circle cx="8" cy="13" r="6.500" fill="#b9b9b9" /><circle cx="13" cy="8" r="6.500" fill="#8a8a8a" /><path d="M5 19h14V9z" fill="#c9c9c9" />
          <circle cx="18" cy="17.500" r="6.500" fill="#d13438" />
          <path d="M15.500 15l5 5M20.500 15l-5 5" stroke="#fff" strokeWidth="1.800" />
        </svg>
        <svg viewBox="0 0 24 20" className="ml-[22px] h-5 w-6" fill="none" stroke="#fff" strokeWidth="2">
          <rect x="1" y="1" width="22" height="18" rx="3" />
          <path d="M1 12.500h22M12 12.500V19" />
        </svg>
        <svg viewBox="0 0 24 20" className="ml-[24px] h-5 w-6" fill="none" stroke="#fff" strokeWidth="1.900" strokeLinecap="round">
          <path d="M1.500 7Q12-3 22.500 7M4.500 10.500q7.500-7 15 0M7.800 14q4.200-4 8.400 0" />
          <circle cx="12" cy="17.500" r="1.200" fill="#fff" />
        </svg>
        <svg viewBox="0 0 24 20" className="ml-3 h-5 w-6" fill="none" stroke="#fff" strokeWidth="1.700" strokeLinejoin="round">
          <path d="M1 7h4l6-5.500v17L5 13H1zM14 6.500q2.500 3.500 0 7M17 4q4.500 6 0 12M20 1.500q6 8.500 0 17" />
        </svg>
        <svg viewBox="0 0 24 18" className="ml-3 h-[18px] w-6" fill="none" stroke="#fff" strokeWidth="1.800">
          <rect x="1" y="2" width="19" height="14" rx="3" />
          <rect x="4" y="5" width="13" height="8" rx="1" fill="#fff" />
          <path d="M22.500 6v6" strokeWidth="2.500" />
        </svg>
        <div className="-mt-[2px] ml-[24px] flex w-[94px] flex-col items-end text-[17.800px] leading-6 whitespace-nowrap">
          <span>18:45</span>
          <span>03-07-2025</span>
        </div>
      </div>
    </div>
  );
}

export default function App() {
  return (
    <div className="h-[1080px] w-[1920px] overflow-hidden font-['Open_Sans',sans-serif]">
      <TabStrip />
      <Toolbar />
      <ShopPage />
      <Taskbar />
    </div>
  );
}
